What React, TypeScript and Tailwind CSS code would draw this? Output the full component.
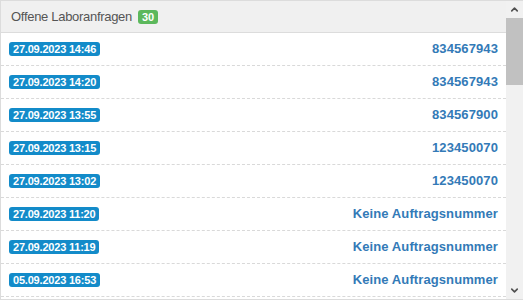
import { ChevronDown, ChevronUp } from 'lucide-react';

interface LabRequest {
  date: string;
  orderNo: string | null;
}

const requests: LabRequest[] = [
  { date: '27.09.2023 14:46', orderNo: '834567943' },
  { date: '27.09.2023 14:20', orderNo: '834567943' },
  { date: '27.09.2023 13:55', orderNo: '834567900' },
  { date: '27.09.2023 13:15', orderNo: '123450070' },
  { date: '27.09.2023 13:02', orderNo: '123450070' },
  { date: '27.09.2023 11:20', orderNo: null },
  { date: '27.09.2023 11:19', orderNo: null },
  { date: '05.09.2023 16:53', orderNo: null },
];

function RequestRow({ request }: { request: LabRequest }) {
  return (
    <div className="flex h-[33px] shrink-0 items-center justify-between border-b border-dashed border-[#d9d9d9] px-2">
      <span className="rounded-[3px] bg-[#138bc9] px-[4px] text-[11px] font-bold leading-[14px] tracking-[-0.2px] text-white">
        {request.date}
      </span>
      <a href="#" className="text-[13px] font-bold tracking-[0.1px] text-[#337ab7]">
        {request.orderNo ?? 'Keine Auftragsnummer'}
      </a>
    </div>
  );
}

export default function App() {
  return (
    <div className="flex h-[300px] w-[523px] border-y border-l border-[#dcdcdc] bg-white font-['Liberation_Sans',Arial,sans-serif]">
      <div className="flex min-w-0 flex-1 flex-col overflow-hidden">
        <div className="flex h-[32px] shrink-0 items-center gap-[6px] border-b border-[#dcdcdc] bg-[#f0f0f0] px-[10px] pt-[1px]">
          <span className="text-[13px] tracking-[-0.3px] text-[#555]">Offene Laboranfragen</span>
          <span className="rounded-[3px] bg-[#5cb85c] px-[4px] text-[11px] font-bold leading-[14px] text-white">
            30
          </span>
        </div>
        {requests.map((request, i) => (
          <RequestRow key={i} request={request} />
        ))}
      </div>

      {/* scrollbar */}
      <div className="flex w-[17px] shrink-0 flex-col bg-[#f1f1f1]">
        <div className="flex h-[17px] items-center justify-center text-[#505050]">
          <ChevronUp className="h-[11px] w-[11px]" strokeWidth={3.5} />
        </div>
        <div className="h-[67px] bg-[#c1c1c1]" />
        <div className="flex-1" />
        <div className="flex h-[17px] items-center justify-center text-[#505050]">
          <ChevronDown className="h-[11px] w-[11px]" strokeWidth={3.5} />
        </div>
      </div>
    </div>
  );
}
